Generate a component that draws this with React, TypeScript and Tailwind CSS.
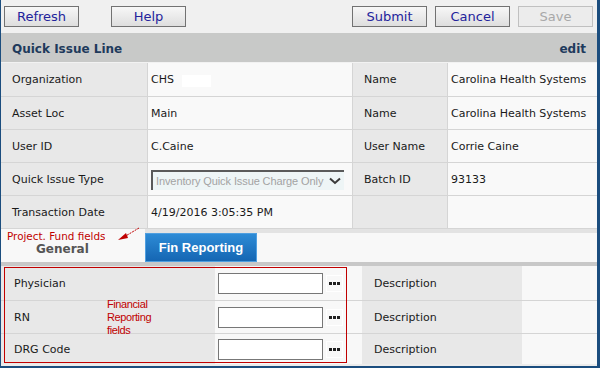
const verdana = "font-['DejaVu_Sans',Verdana,sans-serif]";

interface TopRow {
  label: string;
  value: React.ReactNode;
  label2: string;
  value2: string;
  first?: boolean;
}

function ToolButton({ text, disabled }: { text: string; disabled?: boolean }) {
  return (
    <button
      className={
        disabled
          ? 'w-[75px] h-[21px] border border-[#c0c0c0] bg-[#ececec] text-[13px] leading-none text-[#a8a8a8]'
          : 'w-[75px] h-[21px] border border-[#727272] bg-gradient-to-b from-[#f7f7f7] to-[#dedede] text-[13px] leading-none text-[#23239c]'
      }
    >
      {text}
    </button>
  );
}

function QuickIssueSelect() {
  return (
    <div className="w-[193px] h-[20px] bg-[#eef5f6] border-l-2 border-t-2 border-[#5a5a5a] flex items-center pl-[3px] pr-[3px] font-['Liberation_Sans',Arial,sans-serif] text-[11px] tracking-[-0.1px] text-[#a3a3a3]">
      <span className="flex-1 whitespace-nowrap overflow-hidden">Inventory Quick Issue Charge Only</span>
      <svg width="12" height="8" viewBox="0 0 12 8">
        <path d="M1 1.5 L6 6 L11 1.5" fill="none" stroke="#3a3a3a" strokeWidth="2" />
      </svg>
    </div>
  );
}

function DotsButton() {
  return (
    <div className="w-[17px] h-[17px] border border-white flex items-center justify-center gap-[1px] ml-[3px]">
      <span className="w-[3px] h-[3px] bg-[#1e1e1e]" />
      <span className="w-[3px] h-[3px] bg-[#1e1e1e]" />
      <span className="w-[3px] h-[3px] bg-[#1e1e1e]" />
    </div>
  );
}

const topRows: TopRow[] = [
  {
    label: 'Organization',
    value: (
      <span className="flex items-center">
        CHS<span className="ml-[8px] w-[29px] h-[12px] bg-white" />
      </span>
    ),
    label2: 'Name',
    value2: 'Carolina Health Systems',
    first: true,
  },
  { label: 'Asset Loc', value: 'Main', label2: 'Name', value2: 'Carolina Health Systems' },
  { label: 'User ID', value: 'C.Caine', label2: 'User Name', value2: 'Corrie Caine' },
  { label: 'Quick Issue Type', value: <QuickIssueSelect />, label2: 'Batch ID', value2: '93133' },
  { label: 'Transaction Date', value: '4/19/2016 3:05:35 PM', label2: '', value2: '' },
];

const finRows = [
  { label: 'Physician', h: 'h-[35px] border-b' },
  { label: 'RN', h: 'h-[33px] border-b' },
  { label: 'DRG Code', h: 'h-[30px]' },
];

export default function App() {
  return (
    <div
      className={`relative w-[600px] h-[368px] overflow-hidden bg-[#f8f8f8] border-l border-r-[3px] border-b-2 border-[#1b4d7e] ${verdana} text-[11px] text-[#1a1a1a]`}
    >
      {/* Toolbar */}
      <div className="h-[33px] bg-[#f0f0f0] flex items-start pt-[6px] pl-[3px] pr-[4px]">
        <ToolButton text="Refresh" />
        <div className="ml-[32px]">
          <ToolButton text="Help" />
        </div>
        <div className="ml-auto flex gap-[8px]">
          <ToolButton text="Submit" />
          <ToolButton text="Cancel" />
          <ToolButton text="Save" disabled />
        </div>
      </div>

      {/* Header */}
      <div className="h-[30px] bg-[#c8c9c8] flex items-center justify-between pl-[11px] pr-[11px] pt-[2px] text-[12px] font-bold text-[#1e3a5c] border-b border-[#f2f2f2]">
        <span>Quick Issue Line</span>
        <span>edit</span>
      </div>

      {/* Top table */}
      {topRows.map((row) => (
        <div
          key={row.label}
          className={`flex ${row.first ? 'h-[34px]' : 'h-[33px]'} border-b border-[#d5d5d5]`}
        >
          <div className="w-[147px] bg-[#e8e8e8] border-r border-[#d5d5d5] flex items-center pl-[11px] pt-[2px]">
            {row.label}
          </div>
          <div className="w-[205px] bg-[#f9f9f9] border-r border-[#d5d5d5] flex items-center pl-[3px] pt-[2px]">
            {row.value}
          </div>
          <div className="w-[95px] bg-[#e8e8e8] border-r border-[#d5d5d5] flex items-center pl-[11px] pt-[2px]">
            {row.label2}
          </div>
          <div className="flex-1 bg-[#f9f9f9] flex items-center pl-[3px] pt-[2px] whitespace-nowrap">
            {row.value2}
          </div>
        </div>
      ))}

      {/* Tabs */}
      <div className="h-[33px] flex">
        <div className="w-[144px] bg-[#f8f8f8] flex items-center pl-[35px] pt-[6px] text-[12px] font-bold text-[#555]">
          General
        </div>
        <div className="flex-1 flex flex-col">
          <div className="h-[4px] bg-[#e3e3e3]" />
          <div className="flex-1 flex">
            <div className="w-[112px] bg-gradient-to-b from-[#2d8bd6] to-[#1566b3] border border-[#4f9fe0] flex items-center justify-center font-['Liberation_Sans',Arial,sans-serif] text-[13px] font-bold text-white">
              Fin Reporting
            </div>
            <div className="flex-1 bg-[#f8f8f8]" />
          </div>
        </div>
      </div>
      <div className="h-[4px] bg-[#c8c8c8]" />

      {/* Fin reporting table */}
      {finRows.map((row) => (
        <div key={row.label} className={`flex ${row.h} border-[#d5d5d5]`}>
          <div className="w-[214px] bg-[#e8e8e8] flex items-center pl-[13px] pt-[3px]">{row.label}</div>
          <div className="w-[147px] bg-[#f8f8f8] flex items-center pl-[3px]">
            <div className="w-[105px] h-[21px] bg-white border border-[#777]" />
            <DotsButton />
          </div>
          <div className="w-[160px] bg-[#e8e8e8] flex items-center pl-[12px] pt-[3px]">Description</div>
          <div className="flex-1 bg-[#f8f8f8]" />
        </div>
      ))}
      <div className="h-[2px] bg-[#ececec]" />

      {/* Annotations */}
      <div className="absolute left-[6px] top-[230px] h-[12px] overflow-hidden text-[10.4px] leading-[12px] text-[#c00000]">
        Project. Fund fields
      </div>
      <svg className="absolute left-[110px] top-[224px]" width="34" height="22" viewBox="0 0 34 22">
        <path d="M28 4 L13 13" stroke="#c00000" strokeWidth="1" strokeDasharray="2 1" fill="none" />
        <path d="M7 16 L15 9 L17 14 Z" fill="#c00000" />
      </svg>
      <div className="absolute left-[3px] top-[267px] w-[343px] h-[96px] border border-[#c00000]" />
      <div className="absolute left-[106px] top-[298px] font-['Liberation_Sans',Arial,sans-serif] text-[11px] leading-[13px] tracking-[-0.4px] text-[#c00000]">
        Financial
        <br />
        Reporting
        <br />
        fields
      </div>
    </div>
  );
}
